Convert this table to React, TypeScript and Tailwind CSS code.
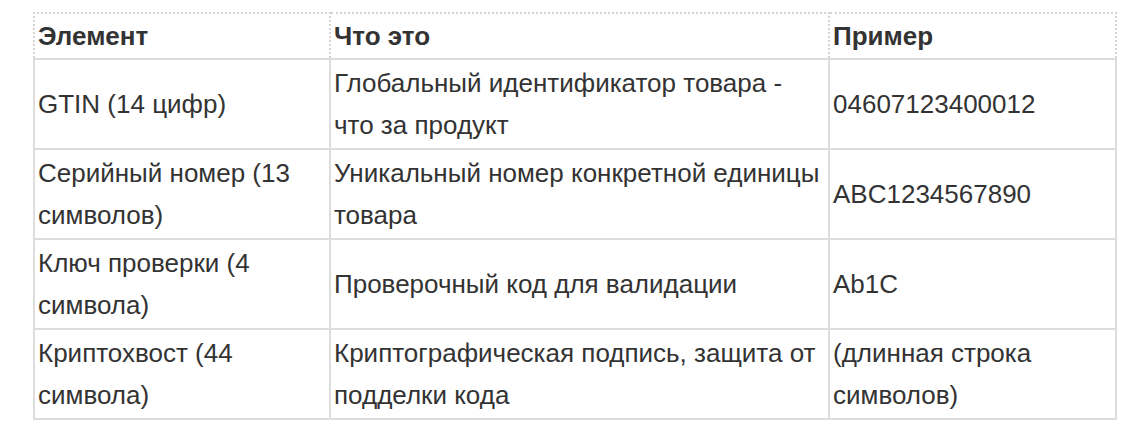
const ROWS = [
  ["GTIN (14 цифр)", "Глобальный идентификатор товара - что за продукт", "04607123400012"],
  ["Серийный номер (13 символов)", "Уникальный номер конкретной единицы товара", "ABC1234567890"],
  ["Ключ проверки (4 символа)", "Проверочный код для валидации", "Ab1C"],
  ["Криптохвост (44 символа)", "Криптографическая подпись, защита от подделки кода", "(длинная строка символов)"],
];

export default function App() {
  return (
    <div className="min-h-[428px] w-[1127px] bg-white pt-[12px] pl-[33px] font-['Liberation_Sans',Arial,sans-serif] text-[26px] leading-[42px] text-[#333]">
      <table className="w-[1082px] table-fixed border-collapse">
        <colgroup>
          <col className="w-[296px]" />
          <col className="w-[499px]" />
          <col className="w-[287px]" />
        </colgroup>
        <thead>
          <tr>
            {["Элемент", "Что это", "Пример"].map((h) => (
              <th
                key={h}
                className="border-2 border-dotted border-[#d4d4d4] px-[3px] py-[1px] text-left align-middle font-bold"
              >
                {h}
              </th>
            ))}
          </tr>
        </thead>
        <tbody>
          {ROWS.map((row) => (
            <tr key={row[0]}>
              {row.map((cell, i) => (
                <td
                  key={i}
                  className="border-2 border-solid border-[#dddddd] px-[3px] py-[2px] align-middle"
                >
                  {cell}
                </td>
              ))}
            </tr>
          ))}
        </tbody>
      </table>
    </div>
  );
}
